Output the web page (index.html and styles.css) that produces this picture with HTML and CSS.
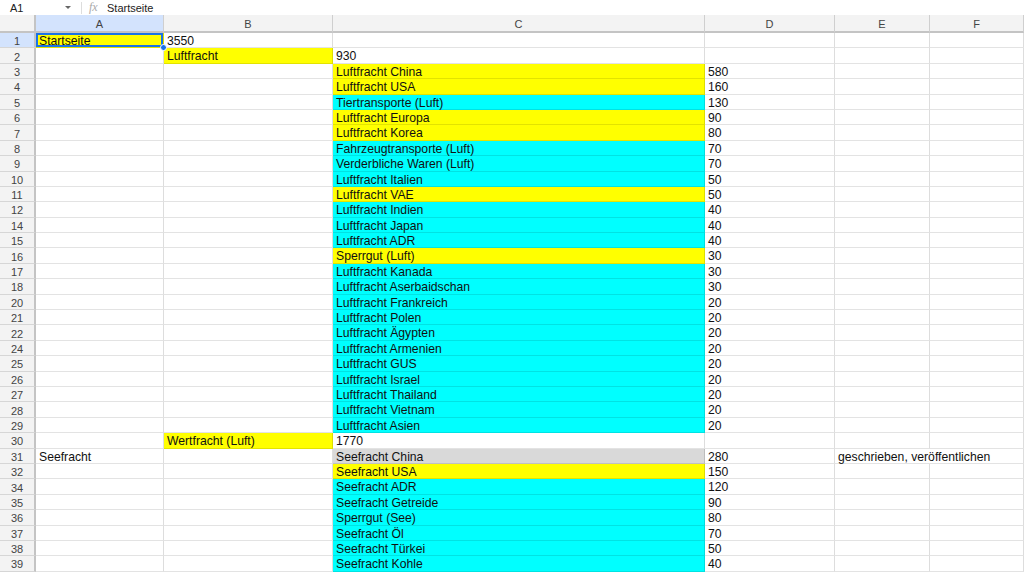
FILE: index.html
```html
<!DOCTYPE html>
<html lang="de">
<head>
  <meta charset="UTF-8" />
  <meta name="viewport" content="width=device-width, initial-scale=1" />
  <title>Tabelle - Frachtarten</title>
  <link rel="stylesheet" href="styles.css">
</head>
<body>

  <div class="formula-bar">
    <span class="name-box">A1</span>
    <span class="name-arrow"></span>
    <span class="bar-sep"></span>
    <span class="fx">fx</span>
    <span class="formula-text">Startseite</span>
  </div>

  <div id="sheet" class="sheet">
    <div class="hdr corner"></div>
    <div class="hdr col active">A</div>
    <div class="hdr col">B</div>
    <div class="hdr col">C</div>
    <div class="hdr col">D</div>
    <div class="hdr col">E</div>
    <div class="hdr col">F</div>
  </div>

  <script>
    // [zeile, spalte A, spalte B, spalte C, spalte D, spalte E]  -  farbe: y = gelb, c = cyan, g = grau
    const rows = [
      [1, ["Startseite", "y"], "3550", "", "", ""],
      [2, "", ["Luftfracht", "y"], "930", "", ""],
      [3, "", "", ["Luftfracht China", "y"], "580", ""],
      [4, "", "", ["Luftfracht USA", "y"], "160", ""],
      [5, "", "", ["Tiertransporte (Luft)", "c"], "130", ""],
      [6, "", "", ["Luftfracht Europa", "y"], "90", ""],
      [7, "", "", ["Luftfracht Korea", "y"], "80", ""],
      [8, "", "", ["Fahrzeugtransporte (Luft)", "c"], "70", ""],
      [9, "", "", ["Verderbliche Waren (Luft)", "c"], "70", ""],
      [10, "", "", ["Luftfracht Italien", "c"], "50", ""],
      [11, "", "", ["Luftfracht VAE", "y"], "50", ""],
      [12, "", "", ["Luftfracht Indien", "c"], "40", ""],
      [14, "", "", ["Luftfracht Japan", "c"], "40", ""],
      [15, "", "", ["Luftfracht ADR", "c"], "40", ""],
      [16, "", "", ["Sperrgut (Luft)", "y"], "30", ""],
      [17, "", "", ["Luftfracht Kanada", "c"], "30", ""],
      [18, "", "", ["Luftfracht Aserbaidschan", "c"], "30", ""],
      [20, "", "", ["Luftfracht Frankreich", "c"], "20", ""],
      [21, "", "", ["Luftfracht Polen", "c"], "20", ""],
      [22, "", "", ["Luftfracht Ägypten", "c"], "20", ""],
      [24, "", "", ["Luftfracht Armenien", "c"], "20", ""],
      [25, "", "", ["Luftfracht GUS", "c"], "20", ""],
      [26, "", "", ["Luftfracht Israel", "c"], "20", ""],
      [27, "", "", ["Luftfracht Thailand", "c"], "20", ""],
      [28, "", "", ["Luftfracht Vietnam", "c"], "20", ""],
      [29, "", "", ["Luftfracht Asien", "c"], "20", ""],
      [30, "", ["Wertfracht (Luft)", "y"], "1770", "", ""],
      [31, "Seefracht", "", ["Seefracht China", "g"], "280", "geschrieben, veröffentlichen"],
      [32, "", "", ["Seefracht USA", "y"], "150", ""],
      [34, "", "", ["Seefracht ADR", "c"], "120", ""],
      [35, "", "", ["Seefracht Getreide", "c"], "90", ""],
      [36, "", "", ["Sperrgut (See)", "c"], "80", ""],
      [37, "", "", ["Seefracht Öl", "c"], "70", ""],
      [38, "", "", ["Seefracht Türkei", "c"], "50", ""],
      [39, "", "", ["Seefracht Kohle", "c"], "40", ""]
    ];

    const fills = { y: "fill-yellow", c: "fill-cyan", g: "fill-grey" };
    const sheet = document.getElementById("sheet");

    function cell(value, extra) {
      const el = document.createElement("div");
      el.className = "cell" + (extra ? " " + extra : "");
      if (Array.isArray(value)) {
        el.textContent = value[0];
        el.classList.add(fills[value[1]]);
      } else {
        el.textContent = value;
      }
      sheet.appendChild(el);
      return el;
    }

    rows.forEach((row) => {
      const num = document.createElement("div");
      num.className = "hdr rownum" + (row[0] === 1 ? " active" : "");
      num.textContent = row[0];
      sheet.appendChild(num);

      const a = cell(row[1]);
      if (row[0] === 1) {
        a.classList.add("selected");
        const handle = document.createElement("span");
        handle.className = "handle";
        a.appendChild(handle);
      }
      cell(row[2]);
      cell(row[3]);
      cell(row[4]);

      // Text in E läuft in F hinein
      if (row[5]) {
        cell(row[5], "span-2");
      } else {
        cell("");
        cell("");
      }
    });
  </script>

</body>
</html>
```

FILE: styles.css
```css
/* Grundlayout */
* {
  box-sizing: border-box;
  margin: 0;
  padding: 0;
}

body {
  font-family: "Liberation Sans", Arial, sans-serif;
  background: #fff;
  color: #111;
  width: 1024px;
  height: 572px;
  overflow: hidden;
}

/* Formelleiste */
.formula-bar {
  height: 15px;
  display: flex;
  align-items: center;
  font-size: 11px;
  color: #222;
}

.name-box {
  width: 64px;
  padding-left: 10px;
}

.name-arrow {
  width: 0;
  height: 0;
  border-left: 3px solid transparent;
  border-right: 3px solid transparent;
  border-top: 3px solid #666;
  margin-left: 1px;
}

.bar-sep {
  width: 1px;
  height: 12px;
  background: #ddd;
  margin-left: 10px;
}

.fx {
  font-family: "Liberation Serif", serif;
  font-style: italic;
  color: #aaa;
  font-size: 12px;
  margin-left: 7px;
  width: 18px;
}

/* Tabelle */
.sheet {
  display: grid;
  grid-template-columns: 36px 128px 169px 372px 130px 95px 94px;
  grid-template-rows: 18px;
  grid-auto-rows: 15.4px;
}

.hdr {
  background: #f3f3f3;
  color: #444;
  font-size: 11px;
  display: flex;
  align-items: center;
  justify-content: center;
  border-right: 1px solid #cfcfcf;
  border-bottom: 1px solid #d6d6d6;
}

.hdr.col {
  border-bottom: 2px solid #c4c4c4;
  padding-top: 1px;
}

.hdr.corner {
  border-bottom: 2px solid #c4c4c4;
  border-right: 2px solid #c4c4c4;
}

.hdr.rownum {
  border-right: 2px solid #c4c4c4;
  padding-top: 2px;
}

.hdr.active {
  background: #d3e3fd;
}

.cell {
  position: relative;
  font-size: 12.2px;
  line-height: 15px;
  padding-left: 3px;
  padding-top: 1px;
  white-space: nowrap;
  overflow: visible;
  border-right: 1px solid rgba(0, 0, 0, 0.13);
  border-bottom: 1px solid rgba(0, 0, 0, 0.11);
}

.span-2 {
  grid-column: span 2;
}

.fill-yellow {
  background: #ffff00;
}

.fill-cyan {
  background: #00ffff;
}

.fill-grey {
  background: #d9d9d9;
}

.selected {
  box-shadow: inset 0 0 0 2px #1a73e8;
}

.handle {
  position: absolute;
  right: -4px;
  bottom: -4px;
  width: 7px;
  height: 7px;
  border-radius: 50%;
  background: #1a73e8;
  border: 1px solid #fff;
  z-index: 2;
}
```
